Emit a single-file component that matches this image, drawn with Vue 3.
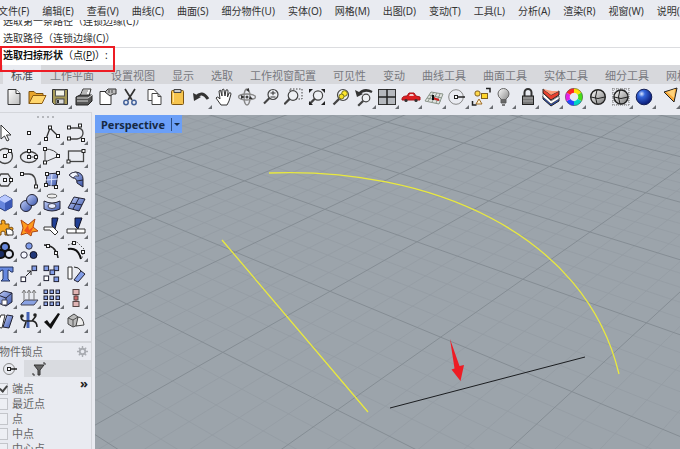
<script setup>
import { ref } from 'vue'

const menus = ['文件(F)', '编辑(E)', '查看(V)', '曲线(C)', '曲面(S)', '细分物件(U)', '实体(O)', '网格(M)', '出图(D)', '变动(T)', '工具(L)', '分析(A)', '渲染(R)', '视窗(W)', '说明(H)']
const tabs = ['标准', '工作平面', '设置视图', '显示', '选取', '工作视窗配置', '可见性', '变动', '曲线工具', '曲面工具', '实体工具', '细分工具', '网格工具']
const activeTab = ref('标准')
const command = ref('')

const h = (x, y) => `<rect x="${x - 1.5}" y="${y - 1.5}" width="3" height="3" fill="#fff" stroke="#222"/>`
const lens = (x, y, r) => `<path d="M${x - r * 0.7} ${y + r * 0.7}L${x - r - 4} ${y + r + 4}" stroke="#444" stroke-width="2.2"/><circle cx="${x}" cy="${y}" r="${r}" fill="#eef0f4" stroke="#444" stroke-width="1.2"/>`
const sq = (x, y, f) => `<rect x="${x}" y="${y}" width="4.6" height="4.6" fill="${f}" stroke="#223"/>`

const tools = [
  { name: '新建', art: '<path d="M4 2.500h8l4 4v11h-12z" fill="url(#paper)" stroke="#333"/><path d="M12 2.500v4h4" fill="#fff" stroke="#333"/>' },
  { name: '打开', art: '<path d="M2 16.500v-12h5l2 2h7v3" fill="#e9a52c" stroke="#7a5010"/><path d="M2 16.500l4-8h13l-4 8z" fill="#ffd66d" stroke="#8a5a12"/>' },
  { name: '保存', more: 1, art: '<path d="M2.500 2.500h15v15h-13l-2-2z" fill="#a79a58" stroke="#333"/><rect x="5.500" y="3" width="9" height="6" fill="#f4f4e8" stroke="#555"/><rect x="6" y="12" width="8" height="5" fill="#ddd" stroke="#444"/><path d="M8 13v3" stroke="#333" stroke-width="2"/>' },
  { name: '打印', art: '<path d="M6 9l3-7h8l-2 7z" fill="#f8f8f8" stroke="#333"/><path d="M2 10l4-2h12v6l-4 4h-12z" fill="#555" stroke="#222"/><path d="M3 11h11M3 14h11M14 11l4-3" stroke="#ddd"/><path d="M9 4h5M8 6h5" stroke="#777"/>' },
  { name: '文件属性', art: '<path d="M3 4.500h11v13h-11z" fill="#fff" stroke="#333"/><path d="M8 5l3-3h8v5h-3l-3 2z" fill="#bbb" stroke="#333"/><path d="M12 3v3M15 3v3" stroke="#444"/>' },
  { name: '剪切', art: '<path d="M5 2l7 11M15 2l-7 11" stroke="#333" stroke-width="1.700"/><circle cx="6" cy="15.500" r="2.200" fill="none" stroke="#45639b" stroke-width="1.500"/><circle cx="14" cy="15.500" r="2.200" fill="none" stroke="#45639b" stroke-width="1.500"/>' },
  { name: '复制', art: '<path d="M4 2.500h6l3 3v8h-9z" fill="#fff" stroke="#444"/><path d="M8 6.500h6l3 3v8h-9z" fill="#fff" stroke="#444"/><path d="M14 6.500v3h3" fill="none" stroke="#444"/>' },
  { name: '粘贴', art: '<rect x="4.500" y="3.500" width="12" height="14" rx="1" fill="#f6c44d" stroke="#7d5510"/><path d="M7 5.500v-3h7v3z" fill="#ccc" stroke="#444"/><path d="M6.500 6v9" stroke="#ffe39a"/>' },
  { name: '撤销', more: 1, art: '<path d="M5 10q6-7 12 2" fill="none" stroke="#333" stroke-width="3"/><path d="M2 6l1 8 7-4z" fill="#333"/>' },
  { name: '平移', art: '<path d="M7 18l-5-7q1-2 3 0l1 1-1-8q2-2 2 1l1 4V3q2-2 2 0l1 6 1-6q2-1 2 1l-.5 6 1.500-4q2-1 2 1l-2 7-2 4z" fill="#fff" stroke="#333"/>' },
  { name: '旋转视图', art: '<ellipse cx="10" cy="10" rx="8.500" ry="3" fill="none" stroke="#888" stroke-width="1.300"/><ellipse cx="10" cy="10" rx="3" ry="8" fill="none" stroke="#888" stroke-width="1.300"/><path d="M4 8v4l4-2zM12 12h4l-3-3zM9 3l3-2v4z" fill="#333"/><circle cx="10" cy="10" r="1.500" fill="#444"/>' },
  { name: '缩放', art: lens(12, 7.5, 5) + '<path d="M9.500 6h5M12 3.800v4.400M9.500 10h5" stroke="#333"/>' },
  { name: '框选缩放', art: '<rect x="6" y="2" width="12" height="10" fill="none" stroke="#444" stroke-dasharray="1.500 1.500"/>' + lens(9, 8.5, 4.8) },
  { name: '缩放至最大范围', art: lens(11, 8.5, 4.6) + '<path d="M2 6V2h4zM14 2h4v4zM18 14v4h-4zM2 14v4h4z" fill="#222"/>' },
  { name: '缩放至选取物件', art: lens(12, 8, 5.5) + '<circle cx="13.500" cy="6.500" r="2.800" fill="#ffe92d" stroke="#77701c"/><circle cx="10.500" cy="9.500" r="2.500" fill="#f5df25" stroke="#77701c"/>' },
  { name: '复原视图', more: 1, art: '<path d="M5 7q5-6 13-2" fill="none" stroke="#333" stroke-width="2.500"/><path d="M1 3l2 7 6-3z" fill="#333"/>' + lens(12, 11, 3.8) },
  { name: '四视图', more: 1, art: '<rect x="1.500" y="2.500" width="17" height="15" fill="#b5b8bd" stroke="#333"/><path d="M10 2v16M1 10h18" stroke="#222" stroke-width="1.500"/>' },
  { name: '右视图', more: 1, art: '<path d="M1 12q0-3 5-3l2-3h5l2 3 4 1v3h-18z" fill="#dc1e22" stroke="#a51318"/><path d="M8 9l1-2h3l1 2z" fill="#f4caca"/><circle cx="5" cy="13.500" r="1.600" fill="#333"/><circle cx="15" cy="13.500" r="1.600" fill="#333"/>' },
  { name: '工作平面', more: 1, art: '<path d="M1 14l6-9 12 2-4 10zM4 14l6-9M8 15l5-9M12 16l4-9M3 11l14 3M5 8l13 3" fill="#e1e4e1" stroke="#899489"/><path d="M9 11l6 2" stroke="#d02020" stroke-width="2"/><path d="M9 8v5" stroke="#111" stroke-width="2"/>' },
  { name: '物件锁点', more: 1, art: '<circle cx="9" cy="10" r="7.300" fill="none" stroke="#888"/><path d="M9 10h9" stroke="#222" stroke-width="1.500"/>' + h(9, 10) },
  { name: '选取', more: 1, art: '<rect x="4" y="4" width="5" height="5" rx="2" fill="#ffd84a" stroke="#806020"/><rect x="10.500" y="6.500" width="6" height="5" fill="#ffd52c" stroke="#806020"/><path d="M8 12l3 5h-6z" fill="#fff2cf" stroke="#a06c22"/><path d="M15 1.500h4v4M1.500 14v4h4" fill="none" stroke="#222" stroke-width="1.500"/>' },
  { name: '显示隐藏', more: 1, art: '<path d="M7 12q-3-2-3-5a5.500 5.500 0 0 1 11 0q0 3-3 5v4h-5z" fill="url(#metal)" stroke="#666"/><path d="M7 13h5M7 15h5M8 18h3" stroke="#555" stroke-width="1.400"/>' },
  { name: '锁定', more: 1, art: '<path d="M6.500 9V5.500a3.500 3.500 0 0 1 7 0V9" fill="none" stroke="#333" stroke-width="2"/><rect x="4.500" y="9" width="11" height="8.500" fill="#777" stroke="#222"/><path d="M5 11h10M5 14h10" stroke="#aaa"/>' },
  { name: '图层', more: 1, art: '<path d="M2 9l8 8 8-6v3l-8 5-8-7z" fill="#2c4fb8" stroke="#222"/><path d="M2 6l8 8 8-5v3l-8 5-8-7z" fill="#fff" stroke="#333" stroke-width=".600"/><path d="M2 2l8 6 8-4v4l-8 5-8-7z" fill="#e8402d" stroke="#222"/><path d="M2 2l8 6 8-4-7 0z" fill="#ff9a76"/>' },
  { name: '物件属性', more: 1, art: '<g fill="none" stroke-width="4.500"><path d="M10 3.500a6.500 6.500 0 0 1 5.600 3.200" stroke="#ffe000"/><path d="M15.600 6.700a6.500 6.500 0 0 1 0 6.500" stroke="#46df18"/><path d="M15.600 13.200A6.500 6.500 0 0 1 10 16.500" stroke="#00d5c6"/><path d="M10 16.500a6.500 6.500 0 0 1-5.600-3.300" stroke="#2545ff"/><path d="M4.400 13.200a6.500 6.500 0 0 1 0-6.500" stroke="#e421e8"/><path d="M4.400 6.700A6.500 6.500 0 0 1 10 3.500" stroke="#ff2623"/></g><circle cx="10" cy="10" r="8.600" fill="none" stroke="#555" stroke-width=".600"/>' },
  { name: '线框', art: '<circle cx="10" cy="10" r="7.300" fill="url(#metal)" stroke="#222" stroke-width="1.400"/><path d="M9 3q-3 7 0 14M3 10q7 3 14 0" fill="none" stroke="#222"/>' },
  { name: '着色', more: 1, art: '<path d="M1 2h18M1 6h18M1 10h18M1 14h18M1 18h18M2 1v18M6 1v18M10 1v18M14 1v18M18 1v18" stroke="#777" stroke-dasharray="1 1"/><circle cx="10" cy="10" r="7" fill="url(#metal)" stroke="#222" stroke-width="1.400"/><path d="M9 3q-3 7 0 14M3 10q7 3 14 0" fill="none" stroke="#222"/>' },
  { name: '渲染', more: 1, art: '<circle cx="10" cy="10" r="7.800" fill="url(#ball)" stroke="#142057"/>' },
  { name: '聚光灯', more: 1, art: '<path d="M3 5l13-4-3 14z" fill="#f6aa3c" stroke="#222"/><path d="M6 5l8-3-1 9z" fill="#ffd27b"/>' }
]

const palette = [
  { name: '选择', art: '<path d="M6 2v14l3.500-3 2.500 5 2-1-2.500-5H16z" fill="#fff" stroke="#333"/>' },
  { name: '点', more: 1, art: h(10, 10) },
  { name: '多段线', more: 1, art: '<path d="M4 16L8 5l8 8" fill="none" stroke="#333" stroke-width="1.300"/>' + h(4, 16) + h(8, 4.5) + h(16, 13) },
  { name: '控制点曲线', more: 1, art: '<path d="M3 5h8q6 0 6 5t-6 6H3" fill="none" stroke="#444" stroke-width="1.300"/>' + h(3, 4.5) + h(14, 2.5) + h(17, 17) + h(3, 15.5) },
  { name: '圆', more: 1, art: '<circle cx="10" cy="10" r="7.500" fill="none" stroke="#444" stroke-width="1.300"/><path d="M10 10l5-5" stroke="#444"/>' + h(10, 10) + h(15, 5) },
  { name: '椭圆', more: 1, art: '<ellipse cx="10" cy="11" rx="8.500" ry="5.500" fill="none" stroke="#444" stroke-width="1.300"/><path d="M10 11h7M10 11V5" stroke="#444"/>' + h(10, 11) + h(10, 5) + h(17, 11) },
  { name: '圆弧', more: 1, art: '<path d="M3 3q10 0 14 7L3 16z" fill="none" stroke="#444"/>' + h(3, 3) + h(3, 16.5) + h(16, 10) },
  { name: '矩形', more: 1, art: '<rect x="2.500" y="5" width="15" height="10.500" fill="none" stroke="#444" stroke-width="1.300"/>' + h(2.5, 15.5) + h(17.500, 5) },
  { name: '多边形', more: 1, art: '<path d="M6 4h7l4 6-4 6H6l-4-6z" fill="none" stroke="#444" stroke-width="1.300"/>' + h(10, 10) + h(16, 10) },
  { name: '曲线圆角', more: 1, art: '<path d="M3 4h7q7 0 7 12" fill="none" stroke="#444" stroke-width="1.500"/>' + h(3, 4) + h(17, 16.5) },
  { name: '曲面', more: 1, art: '<path d="M5 4l11-1-2 13-10-1z" fill="url(#blue)" stroke="#223"/><path d="M10 4l-1 12M4 10l12-1" stroke="#dde5ff"/>' + h(5, 4) + h(16, 3) + h(14, 17) + h(4, 15) },
  { name: '扫掠', more: 1, art: '<path d="M3 5q3-3 7-3 7 1 7 7v8l-6-4q0-5-4-5z" fill="url(#blue)" stroke="#223"/><path d="M3 5q3-3 7-3l3 4q-4-1-6 2z" fill="#f2f5ff" stroke="#445"/><path d="M11 11l6-1" stroke="#223"/>' },
  { name: '立方体', more: 1, art: '<path d="M3 6l7-4 7 4v8l-7 4-7-4z" fill="#6685dd" stroke="#26366e"/><path d="M3 6l7-4 7 4-7 4z" fill="#b9c9ff"/><path d="M10 10l7-4v8l-7 4z" fill="#3b58b5"/>' },
  { name: '布尔运算', more: 1, art: '<circle cx="7" cy="13" r="5.500" fill="url(#blue)" stroke="#223"/><circle cx="13" cy="7" r="5.500" fill="url(#blue)" stroke="#223"/>' },
  { name: '曲面工具', more: 1, art: '<ellipse cx="10" cy="3" rx="5" ry="2" fill="#eee" stroke="#666"/><path d="M2 8q8 4 16 0v8q-8 4-16 0z" fill="url(#blue)" stroke="#223"/><ellipse cx="10" cy="13" rx="4" ry="2.500" fill="#e8edff" stroke="#445"/>' },
  { name: '网格', more: 1, art: '<path d="M2 15l6-11 11 2-6 12z" fill="url(#blue)" stroke="#223"/><path d="M7 16l6-11M5 10l11 2" stroke="#223"/>' },
  { name: '组合', more: 1, art: '<path d="M2 7h5q-2-4 1-4t2 4h4v4q4-2 4 1t-4 2v4h-4q1-4-2-4t-2 4H2z" fill="#f5a51e" stroke="#7a4a0c"/><path d="M11 12h4l3 2v4h-6z" fill="#fff" stroke="#333"/>' },
  { name: '炸开', art: '<path d="M2 18L4 11 2 3l7 5 7-6-2 8 5 4-6 1-1 4-4-3z" fill="#ff9c1d" stroke="#ad4614"/><path d="M5 14l4-6 1 5 5-4-4 8z" fill="#ed5420"/>' },
  { name: '修剪', more: 1, art: '<path d="M10 1h6l-3 11-3-3z" fill="#203f94" stroke="#112"/><path d="M2 10h9l5 5-3 3-5-5H2z" fill="#fff" stroke="#333"/>' },
  { name: '分割', more: 1, art: '<path d="M9 1h7l-4 11-3-3z" fill="#203f94" stroke="#112"/><path d="M1 12h18v4H1z" fill="#fff" stroke="#333"/><path d="M10 12v4" stroke="#222"/>' },
  { name: '群组', more: 1, art: '<circle cx="10" cy="6" r="4" fill="#6687db" stroke="#111" stroke-width="2"/><circle cx="6" cy="13" r="4" fill="#192c63" stroke="#111" stroke-width="2"/><circle cx="14" cy="13" r="4" fill="#e0e5f4" stroke="#111" stroke-width="2"/>' },
  { name: '取消群组', art: '<circle cx="10" cy="5" r="3.200" fill="#7d9bea" stroke="#334"/><circle cx="5" cy="14" r="3.200" fill="#f4f6ff" stroke="#334"/><circle cx="14.500" cy="14" r="3.500" fill="#203779" stroke="#112"/>' },
  { name: '编辑点', art: '<path d="M2 4q12 0 14 13" fill="none" stroke="#222" stroke-width="1.500"/>' + h(6, 5) + h(14, 12) },
  { name: '控制点', more: 1, art: '<path d="M2 8q10-2 13 10" fill="none" stroke="#111" stroke-width="2"/><path d="M2 4l9-3 7 7-2 9" fill="none" stroke="#555" stroke-dasharray="1.500 1.500"/>' + h(8, 2) + h(17, 11) },
  { name: '文字', more: 1, art: '<path d="M3 3h15v5h-2q-1-2-3-2v9l2 2H6l2-2V6Q5 6 5 8H3z" fill="#6688df" stroke="#24345f"/>' },
  { name: '移动', more: 1, art: sq(2, 13, '#fff') + sq(13, 2, '#829de7') + '<path d="M7 12l5-5M8 7h4v4" fill="none" stroke="#222"/>' },
  { name: '复制物件', art: sq(2, 2, '#829de7') + sq(12, 2, '#829de7') + sq(8, 6, '#829de7') + sq(2, 12, '#fff') + sq(12, 13, '#829de7') },
  { name: '旋转', more: 1, art: '<path d="M2 3h4v12H2z" fill="#fff" stroke="#333"/><path d="M8 16l7-9 4 3-7 8z" fill="#829de7" stroke="#223"/><path d="M8 3q5 0 7 4" fill="none" stroke="#222"/>' },
  { name: '实体工具', more: 1, art: '<path d="M3 7l6-4 8 2v9l-6 4-8-3z" fill="url(#blue)" stroke="#223"/><path d="M3 7l8 3 6-5M11 10v8" fill="none" stroke="#223"/><path d="M7 12h5v5H7z" fill="#fff" stroke="#445"/>' },
  { name: '投影', more: 1, art: '<path d="M2 16l4-4h13l-4 5H2z" fill="#8aa2e3" stroke="#445"/><path d="M5 13V3M10 13V3M15 13V3M3 5l2-3 2 3M8 5l2-3 2 3M13 5l2-3 2 3" fill="none" stroke="#777"/>' },
  { name: '阵列', more: 1, art: [2, 8, 14].map(x => [2, 8, 14].map(y => `<rect x="${x}" y="${y}" width="3.500" height="3.500" fill="#91a8e8" stroke="#223"/>`).join('')).join('') },
  { name: '对齐', more: 1, art: '<path d="M10 1v18" stroke="#d44"/><rect x="7" y="1.500" width="6" height="5" fill="#e0b4b4" stroke="#544"/><rect x="8" y="8" width="4" height="4" fill="#c66" stroke="#544"/><rect x="7" y="13.500" width="6" height="5" fill="#e0b4b4" stroke="#544"/>' },
  { name: '镜像', more: 1, art: '<path d="M1 16l5-12h4l-3 13z" fill="#fff" stroke="#333"/><path d="M8 16l4-12 6 1-4 12z" fill="url(#blue)" stroke="#223"/>' },
  { name: '弯曲', more: 1, art: '<path d="M9 1v16" stroke="#4260b5" stroke-width="3"/><path d="M2 5q0 5 5 5h7q4 1 4 6M5 17l2-6M13 10l4-5" fill="none" stroke="#222" stroke-width="1.600"/><circle cx="3" cy="5" r="1.800" fill="#222"/><circle cx="16" cy="4" r="1.800" fill="#222"/>' },
  { name: '检查', more: 1, art: '<path d="M2 11l3-2 3 4L16 2l2 1-9 15z" fill="#111"/>' },
  { name: '图块', more: 1, art: '<path d="M2 7l6-4 4 3v8l-5 2-5-3z" fill="#bbb" stroke="#444"/><path d="M12 6q5 0 6 8l-8 1z" fill="#eee" stroke="#444"/><path d="M2 7l5 2 5-3M7 9v7" fill="none" stroke="#555"/>' }
]

const snaps = ref([
  { name: '端点', on: true },
  { name: '最近点', on: false },
  { name: '点', on: false },
  { name: '中点', on: false },
  { name: '中心点', on: false }
])

// Perspective ground plane: unit square mapped onto four projected corners.
function projector([p0, p1, p2, p3]) {
  const [dx1, dy1] = [p1[0] - p2[0], p1[1] - p2[1]]
  const [dx2, dy2] = [p3[0] - p2[0], p3[1] - p2[1]]
  const sx = p0[0] - p1[0] + p2[0] - p3[0]
  const sy = p0[1] - p1[1] + p2[1] - p3[1]
  const den = dx1 * dy2 - dx2 * dy1
  const g = (sx * dy2 - dx2 * sy) / den
  const k = (dx1 * sy - sx * dy1) / den
  return (u, v) => {
    const w = g * u + k * v + 1
    const x = ((p1[0] - p0[0] + g * p1[0]) * u + (p3[0] - p0[0] + k * p3[0]) * v + p0[0]) / w
    const y = ((p1[1] - p0[1] + g * p1[1]) * u + (p3[1] - p0[1] + k * p3[1]) * v + p0[1]) / w
    return `${x.toFixed(1)} ${y.toFixed(1)}`
  }
}
const project = projector([[400, 173.5], [590, 232], [337.3, 410], [126.7, 304]])
let minor = ''
let major = ''
for (let i = -40; i <= 27; i++) {
  const line = `M${project(i / 10, -5)}L${project(i / 10, 2)}`
  if (i % 5 === 0) major += line
  else minor += line
}
for (let j = -75; j <= 30; j++) {
  const line = `M${project(-4, j / 15)}L${project(2.7, j / 15)}`
  if (j % 5 === 0) major += line
  else minor += line
}
</script>

<template>
  <div class="app">
    <svg class="defs" aria-hidden="true">
      <defs>
        <linearGradient id="paper" x2="1" y2="1"><stop stop-color="#fff" /><stop offset="1" stop-color="#bbb" /></linearGradient>
        <linearGradient id="metal" x2="1" y2="1"><stop stop-color="#fff" /><stop offset="1" stop-color="#777" /></linearGradient>
        <linearGradient id="blue" x2="1" y2="1"><stop stop-color="#c3d0fb" /><stop offset="1" stop-color="#3853a8" /></linearGradient>
        <radialGradient id="ball" cx=".35" cy=".3" r=".7"><stop stop-color="#dce8ff" /><stop offset=".3" stop-color="#3566da" /><stop offset="1" stop-color="#0a1c78" /></radialGradient>
      </defs>
    </svg>

    <nav class="menu">
      <button v-for="m in menus" :key="m" type="button">{{ m }}</button>
    </nav>

    <section class="command">
      <div class="history">
        <p>选取第一条路径（连锁边缘(C)）</p>
        <p>选取路径（连锁边缘(C)）</p>
      </div>
      <div class="prompt">
        <label for="cmd"><b>选取扫掠形状</b>（点(<u>P</u>)）:</label>
        <input id="cmd" v-model="command" type="text" autocomplete="off">
      </div>
      <div class="highlight"></div>
    </section>

    <div class="tabs" role="tablist">
      <button v-for="t in tabs" :key="t" type="button" role="tab" :aria-selected="t === activeTab" :class="{ active: t === activeTab }" @click="activeTab = t">{{ t }}</button>
    </div>

    <div class="toolbar">
      <button v-for="t in tools" :key="t.name" type="button" class="tool" :class="{ more: t.more }" :aria-label="t.name">
        <svg viewBox="0 0 20 20" v-html="t.art" />
      </button>
    </div>

    <main class="work">
      <aside class="side">
        <div class="grip"><i v-for="n in 4" :key="n"></i></div>
        <div class="palette">
          <button v-for="p in palette" :key="p.name" type="button" class="tool" :class="{ more: p.more }" :aria-label="p.name">
            <svg viewBox="0 0 20 20" v-html="p.art" />
          </button>
        </div>
        <section class="osnap">
          <header>
            <h2>物件锁点</h2>
            <button type="button" aria-label="设置">
              <svg viewBox="0 0 12 12"><circle cx="6" cy="6" r="3" fill="none" stroke="#aaadb3" stroke-width="2" /><path d="M6 0v3M6 9v3M0 6h3M9 6h3M2 2l2 2M8 8l2 2M10 2L8 4M4 8l-2 2" stroke="#aaadb3" stroke-width="1.500" /></svg>
            </button>
          </header>
          <div class="modes">
            <button type="button" class="active" aria-label="锁点">
              <svg viewBox="0 0 16 16"><circle cx="6" cy="8" r="5.500" fill="none" stroke="#888" /><path d="M6 8h8" stroke="#222" stroke-width="1.500" /><rect x="4.500" y="6.500" width="3" height="3" fill="#fff" stroke="#222" /></svg>
            </button>
            <button type="button" aria-label="过滤器">
              <svg viewBox="0 0 16 16"><path d="M3 4h10L9 9v5H7V9z" fill="#666" stroke="#333" /><path d="M12 2h2v2M2 12v2h2" fill="none" stroke="#333" /></svg>
            </button>
          </div>
          <div class="snaps">
            <div class="list">
              <label v-for="s in snaps" :key="s.name"><input v-model="s.on" type="checkbox"><span>{{ s.name }}</span></label>
            </div>
            <button type="button" class="expand" aria-label="展开">»</button>
          </div>
        </section>
      </aside>

      <section class="viewport">
        <svg class="scene" viewBox="95 115 585 334" preserveAspectRatio="xMinYMin slice" role="img" aria-label="Perspective">
          <path :d="minor" fill="none" stroke="#949ca3" stroke-width=".800" />
          <path :d="major" fill="none" stroke="#858d94" />
          <path d="M269 173C428 167 585 232 619 374M222 240L368 412" fill="none" stroke="#e9e93e" stroke-width="1.300" />
          <path d="M390 408L585 357" stroke="#1b1d20" />
          <path d="M450 339l9.500 27 4.500-1-3.500 16-9-11.500 3-1z" fill="#ee1c24" />
        </svg>
        <button type="button" class="title"><span>Perspective</span><i></i></button>
      </section>
    </main>
  </div>
</template>

<style>
body { margin: 0; overflow: hidden; }
</style>

<style scoped>
.app { height: 100vh; display: flex; flex-direction: column; overflow: hidden; background: #e9ebf1; color: #333; font-family: "Noto Sans", "Noto Sans CJK SC", sans-serif; }
.defs { position: absolute; width: 0; height: 0; }
button { border: 0; margin: 0; padding: 0; background: none; font: inherit; color: inherit; white-space: nowrap; flex: none; }
p, h2 { margin: 0; font-weight: 400; }
.menu { display: flex; gap: 13px; height: 20px; box-sizing: border-box; padding-top: 2px; margin-left: -2px; font-size: 10px; line-height: 16px; overflow: hidden; flex: none; }
.command { position: relative; background: #fff; color: #111; font-size: 10px; flex: none; }
.history { height: 28px; overflow: hidden; display: flex; flex-direction: column; justify-content: flex-end; line-height: 17px; padding: 0 3px; box-sizing: border-box; border-bottom: 1px solid #dcdde0; color: #333; }
.history p { flex: none; }
.prompt { display: flex; height: 17px; line-height: 15px; padding-left: 3px; }
.prompt input { flex: 1; min-width: 0; border: 0; padding: 0; outline: 0; background: none; font: inherit; }
.highlight { position: absolute; left: 0; top: 26px; width: 115px; height: 26px; box-sizing: border-box; border: 2px solid #ed1c24; z-index: 1; pointer-events: none; }
.tabs { display: flex; gap: 1px; height: 19px; background: #d7d8dc; font-size: 11px; line-height: 22px; color: #77797e; padding-left: 3px; overflow: hidden; flex: none; }
.tabs button { padding: 0 8px; }
.tabs button.active { background: #e9ebf1; color: #4a4c50; }
.toolbar { display: grid; grid-template-columns: repeat(28, 1fr) 24px; height: 28px; padding: 0 0 3px 2px; box-sizing: border-box; flex: none; }
.tool { position: relative; display: flex; align-items: center; justify-content: center; min-width: 0; min-height: 0; }
.tool svg { width: 20px; height: 20px; flex: none; }
.tool.more::after { content: ""; position: absolute; right: 0; bottom: 0; border: 2px solid; border-color: transparent #6a6d72 #6a6d72 transparent; }
.toolbar .tool:last-child { padding-left: 6px; }
.work { display: flex; flex: 1; min-height: 0; }
.side { width: 92px; flex: none; overflow: hidden; border-top: 1px solid #d4d6db; border-right: 1px solid #d4d6db; box-sizing: border-box; }
.grip { display: flex; gap: 3px; justify-content: center; height: 8px; align-items: center; }
.grip i { width: 2px; height: 2px; background: #b5b7bc; }
.palette { display: grid; grid-template-columns: repeat(4, 1fr); grid-auto-rows: 1fr; height: 212px; margin: 0 3px 8px -7px; }
.osnap { border-top: 2px solid #d4d6db; color: #666; font-size: 11px; }
.osnap header { display: flex; justify-content: space-between; align-items: center; height: 17px; padding-right: 3px; }
.osnap h2 { font-size: 11px; line-height: 16px; margin-left: -1px; }
.osnap header svg { display: block; width: 11px; height: 11px; }
.modes { display: flex; height: 17px; background: #d9dbe0; }
.modes button { width: 30px; }
.modes button.active { width: 24px; background: #e9ebf1; }
.modes svg { display: block; width: 16px; height: 16px; margin: 0 auto; }
.modes .active svg { margin: 0 0 0 3px; }
.snaps { display: flex; justify-content: space-between; padding: 4px 3px 0 0; }
.list { display: flex; flex-direction: column; margin-left: -4px; }
.list label { display: flex; align-items: center; gap: 4px; height: 15px; line-height: 15px; }
.list input { appearance: none; width: 12px; height: 12px; margin: 0; border: 1px solid #c3c5ca; background: #edeff4; position: relative; }
.list input:checked::after { content: ""; position: absolute; left: 4px; top: 0; width: 3px; height: 6px; border: solid #444; border-width: 0 2px 2px 0; transform: rotate(40deg); }
.expand { align-self: flex-start; font-size: 13px; line-height: 4px; color: #222; font-weight: 700; }
.viewport { position: relative; flex: 1; min-width: 0; margin: 3px 0 0 3px; background: #9ca4ab; overflow: hidden; }
.scene { display: block; width: 100%; height: 100%; }
.title { position: absolute; left: 0; top: 0; display: flex; align-items: center; gap: 6px; height: 18px; padding: 0 2px 0 6px; background: #6b9ff7; color: #162943; font-size: 11px; font-weight: 700; }
.title i { border: 3px solid transparent; border-top-color: #162943; border-bottom: 0; position: relative; margin-left: 3px; }
.title i::before { content: ""; position: absolute; left: -6px; top: -8px; width: 1px; height: 13px; background: #2c4c80; }
</style>
